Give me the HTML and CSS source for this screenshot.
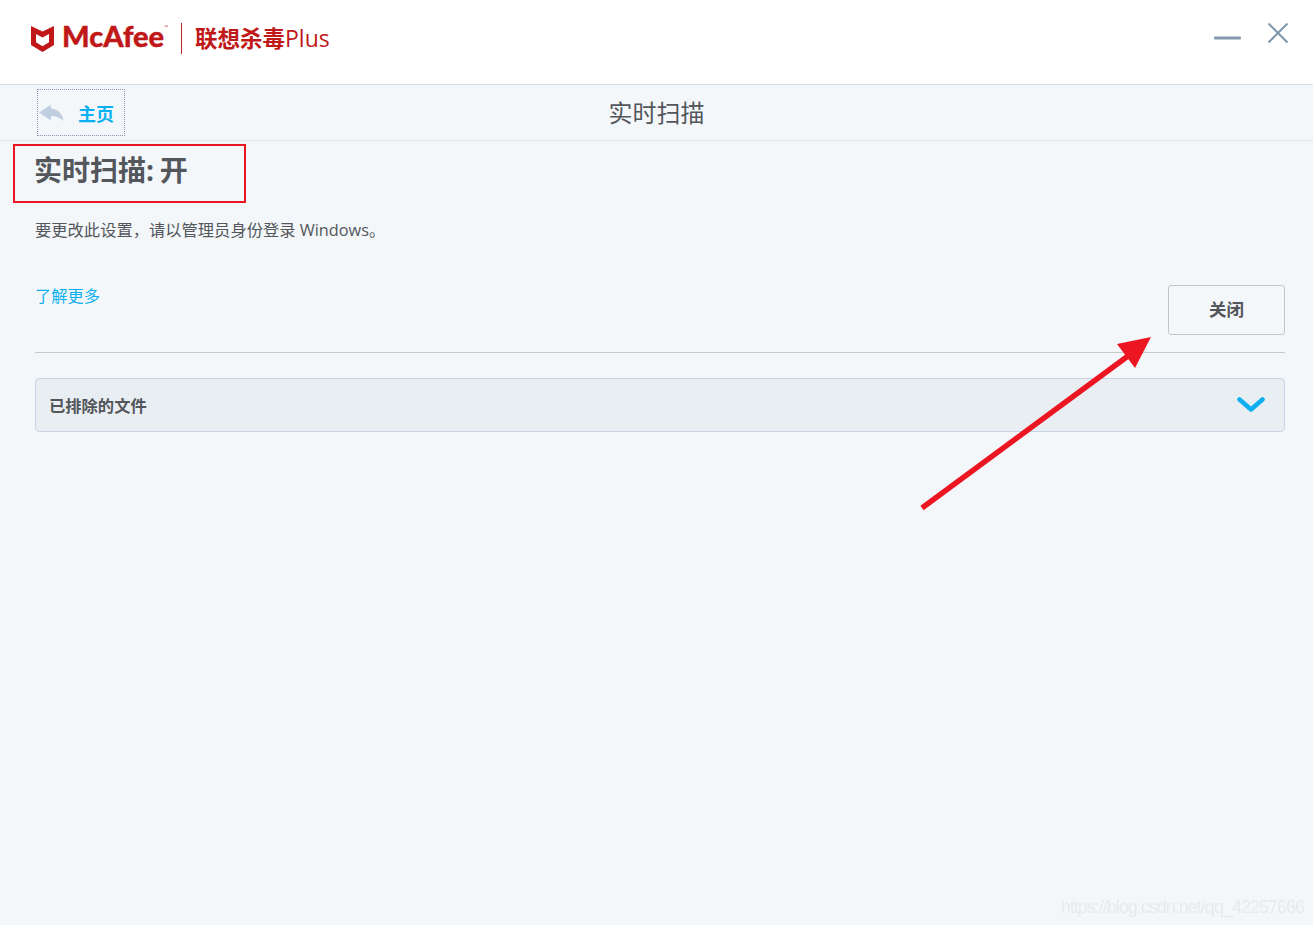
FILE: index.html
```html
<!DOCTYPE html>
<html lang="zh-CN">
<head>
<meta charset="utf-8">
<title>实时扫描</title>
<link rel="stylesheet" href="styles.css">
</head>
<body>
<div class="app">
  <header class="titlebar">
    <div class="brand">
      <svg class="shield" width="23" height="26" viewBox="0 0 23 26"><path fill="#c01818" fill-rule="evenodd" d="M0 0 L11.5 5.5 L23 0 V19 L11.5 26 L0 19 Z M5 8 V16.2 L11.5 20.2 L18 16.2 V8 L11.5 11.5 Z"/></svg>
      <span class="wordmark">McAfee<sup class="tm">™</sup></span>
      <span class="brand-sep"></span>
      <span class="product"><span class="product-cn">联想杀毒</span>Plus</span>
    </div>
    <div class="win-controls">
      <svg class="win-min" width="27" height="4" viewBox="0 0 27 4"><rect y="0.5" width="27" height="3" rx="1" fill="#8499ae"/></svg>
      <svg class="win-close" width="22" height="22" viewBox="0 0 22 22"><path d="M1.5 1.5 L20.5 20.5 M20.5 1.5 L1.5 20.5" stroke="#7f97ad" stroke-width="2" fill="none"/></svg>
    </div>
  </header>
  <nav class="navbar">
    <button class="home-btn" type="button">
      <svg width="25" height="16" viewBox="0 0 25 16"><path fill="#bfcfe0" d="M0 7.5 L11.5 0 L12 3.5 C20 4.5 24 10 24.5 16 C21 12.5 17 11 12 11 V15.5 Z"/></svg>
      <span>主页</span>
    </button>
    <div class="nav-title">实时扫描</div>
  </nav>
  <main class="content">
    <h1 class="status">实时扫描: 开</h1>
    <p class="hint">要更改此设置，请以管理员身份登录 Windows。</p>
    <div class="action-row">
      <a class="learn" href="#">了解更多</a>
      <button class="close-btn" type="button">关闭</button>
    </div>
    <div class="accordion">
      <span>已排除的文件</span>
      <svg width="28" height="18" viewBox="0 0 28 18"><path d="M2.5 3.5 L14 13.5 L25.5 3.5" stroke="#0cb0f0" stroke-width="4.5" stroke-linecap="round" stroke-linejoin="round" fill="none"/></svg>
    </div>
  </main>
</div>
<div class="mark-box"></div>
<svg class="mark-arrow" width="1313" height="925" viewBox="0 0 1313 925"><path d="M922 508 L1128 356" stroke="#ec1622" stroke-width="5.5" fill="none"/><path fill="#ec1622" d="M1151 337 L1117 344 L1135 368 Z"/></svg>
<div class="watermark">https://blog.csdn.net/qq_42257666</div>
</body>
</html>
```
FILE: styles.css
```css
* { box-sizing: border-box; }
html, body { margin: 0; height: 100%; overflow: hidden; }
body {
  font-family: "Open Sans", "Noto Sans", "Noto Sans CJK SC", sans-serif;
  background: #f3f7fa;
  color: #53565a;
}
.app { height: 925px; display: flex; flex-direction: column; }

.titlebar {
  height: 85px;
  flex: none;
  background: #fff;
  border-bottom: 1px solid #d9dde8;
  display: flex;
  justify-content: space-between;
  padding: 23px 24px 0 31px;
}
.brand { display: flex; align-items: flex-start; height: 32px; }
.shield { margin-top: 3px; margin-right: 8px; flex: none; }
.wordmark {
  font-family: "Lato", sans-serif;
  font-weight: 900;
  font-size: 29px;
  line-height: 28px;
  margin-top: -1px;
  color: #c01818;
  -webkit-text-stroke: 0.4px #c01818;
  width: 104px;
  flex: none;
  white-space: nowrap;
}
.tm { font-size: 5px; font-weight: 400; vertical-align: 18px; line-height: 0; -webkit-text-stroke: 0; }
.brand-sep { width: 1px; height: 31px; background: #b02a2a; margin-left: 15px; margin-right: 13px; flex: none; }
.product {
  font-size: 23px;
  line-height: 32px;
  margin-top: -1px;
  color: #c01818;
  white-space: nowrap;
}
.product-cn { font-size: 22.5px; font-weight: 700; }
.win-controls { display: flex; align-items: flex-start; gap: 26px; }
.win-min { margin-top: 13px; }
.win-close { margin-top: -1px; }

.navbar {
  height: 56px;
  flex: none;
  border-bottom: 1px solid #dfe4ec;
  position: relative;
  padding: 4px 0 0 37px;
}
.home-btn {
  width: 88px;
  height: 47px;
  border: 1px dotted #8d96b4;
  background: transparent;
  padding: 0 0 0 1px;
  display: flex;
  align-items: center;
  gap: 14px;
  font: inherit;
  font-size: 18px;
  font-weight: 700;
  color: #0cb0f0;
}
.nav-title {
  position: absolute;
  left: 0;
  right: 0;
  top: 12px;
  text-align: center;
  font-size: 24px;
  line-height: 32px;
  color: #53565a;
}

.content { padding: 0 28px 0 35px; }
.status {
  margin: 9px 0 0 -1px;
  font-size: 28px;
  line-height: 40px;
  font-weight: 700;
  word-spacing: -1.5px;
  color: #53565a;
}
.hint { margin: 30px 0 0; font-size: 16.3px; line-height: 20px; }
.action-row {
  margin-top: 45px;
  height: 68px;
  border-bottom: 1px solid #c8c8c8;
  display: flex;
  justify-content: space-between;
  align-items: flex-start;
}
.learn { font-size: 16.3px; line-height: 22px; color: #0cb0f0; text-decoration: none; }
.close-btn {
  width: 117px;
  height: 50px;
  border: 1px solid #c4c4c4;
  border-radius: 3px;
  background: transparent;
  padding: 0 0 4px;
  font: inherit;
  font-size: 17.5px;
  font-weight: 700;
  color: #53565a;
}
.accordion {
  margin-top: 25px;
  height: 54px;
  background: #e9eef3;
  border: 1px solid #c5d3e2;
  border-radius: 4px;
  display: flex;
  justify-content: space-between;
  align-items: center;
  padding: 0 19px 0 13px;
  font-size: 16.3px;
  font-weight: 700;
}

.mark-box {
  position: absolute;
  left: 13px;
  top: 144px;
  width: 233px;
  height: 59px;
  border: 2px solid #ec1622;
}
.mark-arrow { position: absolute; left: 0; top: 0; pointer-events: none; }
.watermark {
  position: absolute;
  right: 9px;
  top: 896px;
  font-family: "Liberation Sans", sans-serif;
  font-size: 18px;
  line-height: 22px;
  letter-spacing: -1px;
  color: #e7eaed;
  filter: blur(0.5px);
}
```
